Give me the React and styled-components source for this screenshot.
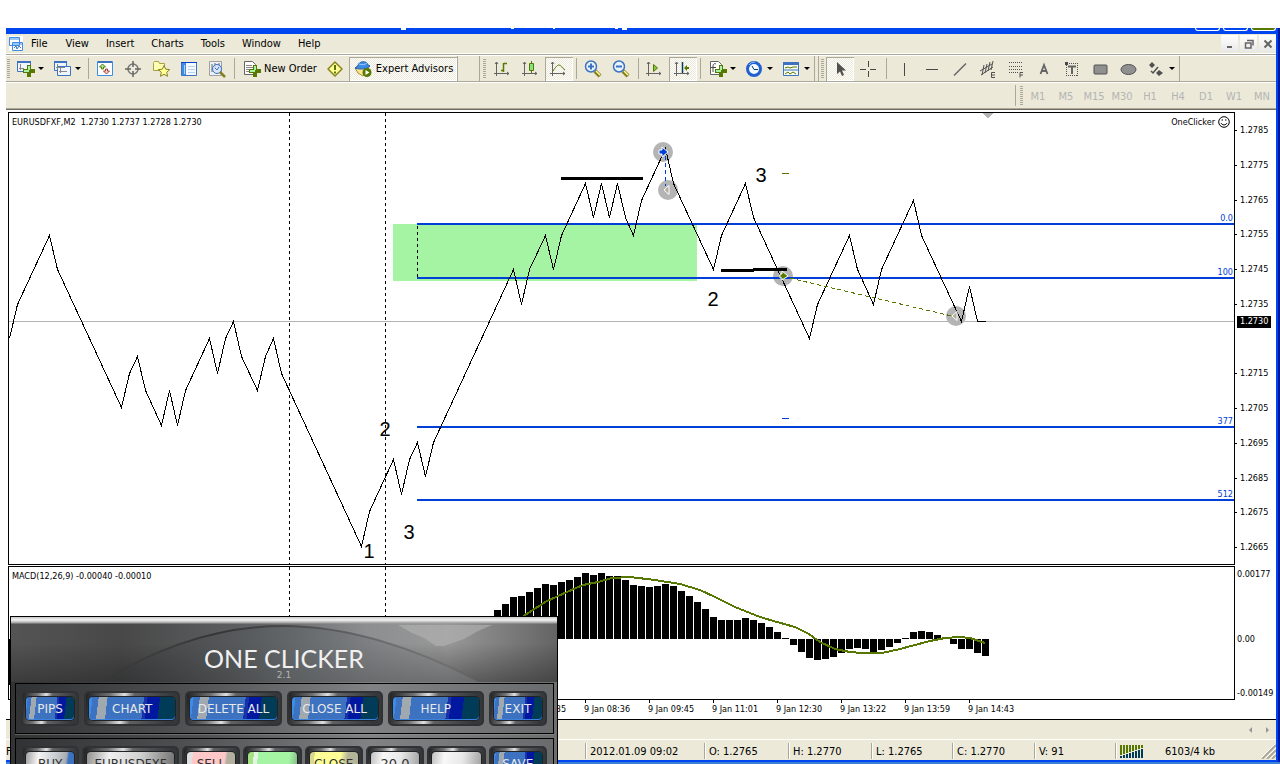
import React from 'react'
import styled, { createGlobalStyle, css } from 'styled-components';

const ui = '"DejaVu Sans Condensed", "Noto Sans", sans-serif';

/* price chart: [bar number, pips above 1.2700] */
const turns = [
  [0, 25], [1, 35], [5, 55], [6, 45], [14, 5], [15, 15], [16, 20], [17, 10], [19, 0], [20, 10],
  [21, 0], [22, 10], [25, 25], [26, 15], [27, 25], [28, 30], [29, 20], [31, 10], [32, 20], [33, 25],
  [34, 15], [44, -35], [45, -25], [48, -10], [49, -20], [50, -10], [51, -5], [52, -15], [53, -5],
  [63, 45], [64, 35], [65, 45], [67, 55], [68, 45], [69, 55], [72, 70], [73, 60], [74, 70], [75, 60],
  [76, 70], [77, 60], [78, 55], [79, 65], [82, 80], [83, 70], [88, 45], [89, 55], [92, 70], [93, 60],
  [100, 25], [101, 35], [105, 55], [106, 45], [108, 35], [109, 45], [113, 65], [114, 55], [119, 30],
  [120, 40], [121, 30], [122, 30],
];
const barX = (bar) => bar * 8 + 0.5;
const priceY = (pips) => Math.round(208 - (pips - 30) * 3.455) + 0.5;
const priceLine = turns.map(([bar, pips]) => `${barX(bar)},${priceY(pips)}`).join(' ');

const firstBar = 61;
const macd = [
  29, 35, 42, 43, 47, 51, 55, 54, 57, 59, 62, 66, 64, 66, 63, 63, 59, 54, 53, 52, 53, 55, 53, 48,
  43, 37, 30, 22, 19, 19, 19, 21, 19, 16, 12, 7, 1, -6, -13, -19, -21, -20, -18, -14, -10, -9, -10,
  -13, -11, -8, -4, 1, 7, 8, 7, 4, 1, -5, -10, -10, -14, -17,
];
const signal = '491,67 505,56 516,48 538,34 558,25 574,18 589,15 603,11 621,10 646,13 671,17 691,23 706,30 726,40 751,50 768,55 786,60 800,67 811,75 826,82 841,85 853,86 873,86 891,82 906,78 921,74 936,71 951,70 961,71 976,76';

const levels = [
  { y: 110, name: '0.0' },
  { y: 164, name: '100' },
  { y: 313, name: '377' },
  { y: 386, name: '512' },
];
const prices = ['1.2785', '1.2775', '1.2765', '1.2755', '1.2745', '1.2735', '', '1.2715', '1.2705', '1.2695', '1.2685', '1.2675', '1.2665'];
const times = ['9 Jan 07:35', '9 Jan 08:36', '9 Jan 09:45', '9 Jan 11:01', '9 Jan 12:30', '9 Jan 13:22', '9 Jan 13:59', '9 Jan 14:43'];
const periods = ['M1', 'M5', 'M15', 'M30', 'H1', 'H4', 'D1', 'W1', 'MN'];
const menus = ['File', 'View', 'Insert', 'Charts', 'Tools', 'Window', 'Help'];

/* ---------- icons ---------- */

const Plus = () => (
  <>
    <path d="M12 6h4v4h4v4h-4v4h-4v-4H8v-4h4z" fill="#567800" />
    <path d="M13 7h2v4h-2zM9 11h5v2H9z" fill="#a4f4a4" />
  </>
);

const Axes = () => <path d="M3.500 3v14M1 14.500h15M2 5l1.500-2L5 5M14 13l2 1.500-2 1.500" stroke="#646464" fill="none" />;

const icons = {
  app: (
    <>
      <path d="M3 2h14v15H3z" fill="#fff" />
      <path d="M3.500 3.500h10v8h-10zM6.500 8.500h10v8h-10z" fill="#fff" stroke="#3c8ce8" />
      <path d="M4 5h9M7 10h9" stroke="#3c8ce8" />
      <path d="M8 14l2-2 1 3 2-3 2 2" stroke="#3c72c0" fill="none" />
    </>
  ),
  newChart: (
    <>
      <path d="M2.500 2.500h13v10h-13z" fill="#f0f4fc" stroke="#3c72c0" />
      <path d="M2 3h14" stroke="#3c72c0" strokeWidth="2" />
      <path d="M5.500 5v6M4 9.500h5" stroke="#888" />
      <Plus />
    </>
  ),
  profiles: (
    <>
      <path d="M2.500 2.500h12v9h-12z" fill="#f0f4fc" stroke="#3c72c0" />
      <path d="M2 3h13" stroke="#3c72c0" strokeWidth="2" />
      <path d="M5.500 7.500h13v9h-13z" fill="#f0f4fc" stroke="#3c72c0" />
      <path d="M5.500 5v5M4 8.500h9M8.500 9v5M7 12.500h8" stroke="#888" />
    </>
  ),
  market: (
    <>
      <path d="M2.500 2.500h15v14h-15z" fill="#fff" stroke="#3c8ce8" />
      <path d="M3 3h14" stroke="#3c72c0" strokeWidth="2" />
      <path d="M7.500 5l3 3h-2v2h-2v-2h-2z" fill="#a4f4a4" stroke="#567800" />
      <path d="M11.500 15l3-3h-2v-2h-2v2h-2z" fill="#ffd0c8" stroke="#a04038" />
    </>
  ),
  target: (
    <>
      <circle cx="10" cy="10" r="5" fill="none" stroke="#787878" strokeWidth="1.500" />
      <path d="M10 2v6M10 12v6M2 10h6M12 10h6" stroke="#646464" strokeWidth="1.500" />
    </>
  ),
  favorites: (
    <>
      <path d="M2.500 4.500v-1l1-1h4l1 2h5v7h-11z" fill="#ffffb4" stroke="#a8a040" />
      <path d="M13 6.500l1.700 3.700 4 .4-3 2.700.9 4-3.600-2-3.600 2 .9-4-3-2.700 4-.4z" fill="#ffff98" stroke="#8a8420" />
    </>
  ),
  terminal: (
    <>
      <path d="M2.500 3.500h15v13h-15z" fill="#f4f8ff" stroke="#3c72c0" />
      <path d="M3 4h4v12H3z" fill="#3c8ce8" />
      <path d="M5.500 6v9M9 7.500h7M9 10.500h7M9 13.500h7" stroke="#b8d0f0" />
      <path d="M2 3.500h16" stroke="#0046c0" />
    </>
  ),
  tester: (
    <>
      <path d="M2.500 2.500h12v14h-12z" fill="#eef2f8" stroke="#a0a0a0" />
      <path d="M5 5v8M8 4v5M12 4v4" stroke="#646464" />
      <circle cx="10" cy="10" r="4.500" fill="#d4e4fc" fillOpacity=".8" stroke="#3c72c0" />
      <path d="M8 9l2 2 2-3" stroke="#3c72c0" fill="none" />
      <path d="M13 13l5 5" stroke="#867c20" strokeWidth="2.500" />
    </>
  ),
  order: (
    <>
      <path d="M3.500 2.500h8l3 3v10h-11z" fill="#fff" stroke="#646464" />
      <path d="M5 6.500h6M5 8.500h7M5 10.500h6M5 12.500h5" stroke="#888" />
      <Plus />
    </>
  ),
  alert: (
    <>
      <path d="M10 3l7 7-7 7-7-7z" fill="#ffff98" stroke="#8a8420" strokeWidth="1.500" strokeLinejoin="round" />
      <path d="M10 6v5M10 12.500v2" stroke="#567800" strokeWidth="2" />
    </>
  ),
  expert: (
    <>
      <path d="M2 9l3 5 5 3 6-6-1-4H4z" fill="#ffe88c" stroke="#a09040" />
      <path d="M5 7c0-5 9-6 10-1l2 1c-3 3-10 4-15 2z" fill="#3c8ce8" stroke="#2860a8" />
      <path d="M6 5c2 1 6 1 8-1" stroke="#9cc8ff" fill="none" />
      <circle cx="14" cy="13.500" r="4.500" fill="#567800" />
      <path d="M12.500 11l4 2.500-4 2.500z" fill="#fff" />
    </>
  ),
  bars: (<><Axes /><path d="M10.500 4v9M8 11.500h2M11 4.500h3" stroke="#567800" strokeWidth="1.500" /></>),
  candles: (<><Axes /><path d="M10.500 2v12" stroke="#567800" /><path d="M8.500 4.500h4v7h-4z" fill="#80e480" stroke="#567800" /></>),
  line: (<><Axes /><path d="M4 12c2-3 4-6 6-6s3 3 6 5" stroke="#567800" fill="none" /></>),
  zoomIn: (
    <>
      <path d="M12 12l5 5" stroke="#867c20" strokeWidth="4" />
      <path d="M13 12l4 4" stroke="#ffff98" strokeWidth="1.500" />
      <circle cx="8" cy="7.500" r="5.500" fill="#e8f2ff" stroke="#3c72c0" strokeWidth="1.500" />
      <path d="M8 4.500v6M5 7.500h6" stroke="#3c72c0" strokeWidth="2" />
    </>
  ),
  zoomOut: (
    <>
      <path d="M12 12l5 5" stroke="#867c20" strokeWidth="4" />
      <path d="M13 12l4 4" stroke="#ffff98" strokeWidth="1.500" />
      <circle cx="8" cy="7.500" r="5.500" fill="#e8f2ff" stroke="#3c72c0" strokeWidth="1.500" />
      <path d="M5 7.500h6" stroke="#3c72c0" strokeWidth="2" />
    </>
  ),
  scroll: (<><Axes /><path d="M8.500 5.500l4 3.500-4 3.500z" fill="#80c840" stroke="#567800" /></>),
  shift: (<><Axes /><path d="M9.500 3v11" stroke="#003c58" strokeWidth="1.500" /><path d="M11 9l3-3v2h2v2h-2v2z" fill="#567800" /></>),
  indicators: (
    <>
      <path d="M3.500 2.500h8l3 3v10h-11z" fill="#fff" stroke="#646464" />
      <path d="M9 5c-2-1-3 0-3 3v5M4 8.500h5" stroke="#484848" fill="none" />
      <Plus />
    </>
  ),
  clock: (
    <>
      <circle cx="10" cy="10" r="6.500" fill="#f4f8ff" stroke="#2060d0" strokeWidth="3" />
      <path d="M5 6a6.500 6.500 0 0 1 6-3" stroke="#8cc0ff" fill="none" />
      <path d="M8 7l2 3.500h4" stroke="#003c58" fill="none" />
    </>
  ),
  template: (
    <>
      <path d="M2.500 3.500h15v13h-15z" fill="#f8fcf0" stroke="#3c72c0" />
      <path d="M2 4.500h16" stroke="#3c72c0" strokeWidth="3" />
      <path d="M3 11h14" stroke="#3c72c0" />
      <path d="M4 9l3-1 2 1 3-1h4M4 15l3-2 2 2 3-2 3 2" stroke="#567800" fill="none" />
    </>
  ),
  cursor: <path d="M7 3v12l3-2.500 2 4.500 2-1-2-4.500h4z" fill="#505050" />,
  cross: <path d="M10.500 2v6M10.500 12v6M2 10.500h6M12 10.500h6" stroke="#484848" />,
  vline: <path d="M10.500 4v13" stroke="#484848" />,
  hline: <path d="M4 10.500h12" stroke="#484848" />,
  diagonal: <path d="M4 16.500L16 4.500" stroke="#646464" strokeWidth="1.500" />,
  channel: (
    <>
      <path d="M2 12L14 5M3 16L15 8M6 6l-2 10M9 5L7 14M12 3l-2 9M15 2l-2 9" stroke="#505050" />
      <path d="M17 13.500h-3.500v5H17M14 16h3" stroke="#505050" fill="none" />
    </>
  ),
  fibo: (
    <>
      <path d="M3 3.500h13M3 7.500h13M3 10.500h13M3 13.500h9" stroke="#505050" strokeDasharray="1 1" shapeRendering="crispEdges" />
      <path d="M17 13.500h-3v5M14 16h3" stroke="#505050" fill="none" />
    </>
  ),
  text: <path d="M6.500 15l3.500-9 3.500 9M8 12h4" stroke="#646464" strokeWidth="1.800" fill="none" />,
  label: (
    <>
      <path d="M4.500 4.500h11v12h-11z" fill="none" stroke="#505050" strokeDasharray="1 1" shapeRendering="crispEdges" />
      <path d="M3 3h3v3H3z" fill="#484848" />
      <path d="M6 7.500h8M10 7v8" stroke="#646464" strokeWidth="2" />
    </>
  ),
  rect: <rect x="4" y="6" width="13" height="9" rx="1" fill="#909090" stroke="#505050" />,
  ellipse: <ellipse cx="10.500" cy="10.500" rx="7.500" ry="5" fill="#909090" stroke="#505050" />,
  arrows: (
    <>
      <path d="M6 3l3 3-3 3-3-3zM13 11l4 3-4 3-3-3z" fill="#505050" />
      <path d="M5 12l2 2 5-6" stroke="#505050" strokeWidth="1.500" fill="none" />
    </>
  ),
};

const Icon = ({ name }) => (
  <svg width="20" height="20" viewBox="0 0 20 20" aria-hidden="true">{icons[name]}</svg>
);

const Tool = ({ name, pressed, drop }) => (
  <ToolButton $pressed={pressed} $drop={drop} aria-label={name} aria-pressed={pressed}>
    <Icon name={name} />
    {drop && <Arrow />}
  </ToolButton>
);

/* ---------- one clicker window ---------- */

const Key = ({ children, tone = 'blue', wide, size }) => (
  <KeyShell $wide={wide}>
    <KeyFace $tone={tone} $size={size}>{children}</KeyFace>
  </KeyShell>
);

const Clicker = () => (
  <Floating aria-label="One Clicker">
    <Header>
      <Arc viewBox="0 0 546 65" preserveAspectRatio="none" aria-hidden="true">
        <defs>
          <linearGradient id="dome" x1="0" x2="1">
            <stop offset="0" stopColor="#303234" stopOpacity=".2" />
            <stop offset=".5" stopColor="#606466" stopOpacity=".8" />
            <stop offset="1" stopColor="#8c8e90" stopOpacity=".3" />
          </linearGradient>
          <linearGradient id="edge" x1="0" x2="1">
            <stop offset="0" stopColor="#2c2c2c" stopOpacity="0" />
            <stop offset=".3" stopColor="#2c2c2c" stopOpacity=".8" />
            <stop offset="1" stopColor="#505254" stopOpacity=".2" />
          </linearGradient>
        </defs>
        <path d="M387 8l14 8 12 5 12 8h8l20-7 14-8 14-6z" fill="#b4b4b4" opacity=".6" />
        <path d="M90 65C150 28 210 9 272 9s130 20 196 56z" fill="url(#dome)" />
        <path d="M90 65C150 28 210 9 272 9s130 20 196 56" fill="none" stroke="url(#edge)" strokeWidth="2" />
      </Arc>
      <Title>ONE CLICKER</Title>
      <Version>2.1</Version>
    </Header>
    <KeyGroup $gap={5}>
      <Key>PIPS</Key>
      <Key wide>CHART</Key>
      <Key wide>DELETE ALL</Key>
      <Key wide>CLOSE ALL</Key>
      <Key wide>HELP</Key>
      <Key>EXIT</Key>
    </KeyGroup>
    <KeyGroup $gap={3}>
      <Key tone="silver">BUY</Key>
      <Key tone="grey" wide>EURUSDFXF</Key>
      <Key tone="pink">SELL</Key>
      <Key tone="green" />
      <Key tone="yellow">CLOSE</Key>
      <Key tone="white" size={13}>20.0</Key>
      <Key tone="white" />
      <Key>SAVE</Key>
    </KeyGroup>
  </Floating>
);

const PriceChart = () => (
  <Plot $height={453}>
    <svg width="100%" height="451" shapeRendering="crispEdges">
      <rect x="384" y="111" width="304" height="57" fill="#a4f4a4" />
      <g fill="#b4b4b4" shapeRendering="auto">
        <circle cx="654" cy="39" r="10" />
        <circle cx="659" cy="77" r="10" />
        <circle cx="774" cy="163" r="10" />
        <circle cx="947" cy="203" r="10" />
      </g>
      <path d="M0 208.500H3000" stroke="#b4b4b4" />
      <path d="M280.500 0V451M376.500 0V451M408.500 113V164" stroke="#000" strokeDasharray="3 3" />
      <path d="M973 0h12l-6 5z" fill="#b4b4b4" />
      {levels.map((level) => (
        <rect key={level.name} x="408" y={level.y} width="100%" height="2" fill="#0040d8" />
      ))}
      <polyline points={priceLine} fill="none" stroke="#000" />
      <path d="M552 65.500h82M712 157.500h33M744 156.500h34" stroke="#000" strokeWidth="3" />
      <path d="M773 60.500h7" stroke="#567800" />
      <path d="M773 305.500h7" stroke="#0040d8" />
      <path d="M774 163.500L947 204" stroke="#567800" strokeDasharray="4 3" />
      <path d="M656.500 43V73" stroke="#0040d8" strokeDasharray="4 3" />
      <g shapeRendering="auto" stroke="#fff">
        <path d="M650 37h3v-3l6 5-6 5v-3h-3z" fill="#0040d8" />
        <path d="M655 77l5-4.500v9z" fill="#b4aca0" />
        <path d="M771 161h2v-3l6 5-6 4v-2h-2z" fill="#567800" />
        <path d="M943 203l5-4.500v9z" fill="#b4aca0" />
      </g>
      <Count x="752" y="69">3</Count>
      <Count x="704" y="193">2</Count>
      <Count x="376" y="323">2</Count>
      <Count x="400" y="426">3</Count>
      <Count x="360" y="445">1</Count>
    </svg>
    <PlotTitle>EURUSDFXF,M2&nbsp; 1.2730 1.2737 1.2728 1.2730</PlotTitle>
    <AdvisorName>
      OneClicker
      <svg width="12" height="12" viewBox="0 0 12 12" aria-hidden="true">
        <circle cx="6" cy="6" r="5.300" fill="none" stroke="#000" />
        <path d="M3.500 4h1.500M7 4h1.500M3 7c1 2.500 5 2.500 6 0" fill="none" stroke="#000" />
      </svg>
    </AdvisorName>
    {levels.map((level) => (
      <LevelName key={level.name} style={{ top: level.y - 11 }}>{level.name}</LevelName>
    ))}
  </Plot>
);

const MacdChart = () => (
  <Plot $height={134}>
    <svg width="100%" height="132" shapeRendering="crispEdges">
      <path d="M280.500 0V132M376.500 0V132" stroke="#000" strokeDasharray="3 3" />
      <rect x="0" y="72" width="4" height="46" />
      {macd.map((v, i) => (
        <rect key={i} x={(firstBar + i) * 8 - 3} y={v > 0 ? 72 - v : 72} width="7" height={Math.abs(v)} />
      ))}
      <polyline points={signal} fill="none" stroke="#567800" strokeWidth="2" />
    </svg>
    <PlotTitle>MACD(12,26,9) -0.00040 -0.00010</PlotTitle>
  </Plot>
);

const App = () => {
  return (
    <Page>
      <Global />
      <Frame>
        <TitleBar>
          <svg width="240" height="3" aria-hidden="true">
            <path d="M7 0h5v2H7zM117 0h3v1h-3zM159 0h2v1h-2zM221 0h3v1h-3zM228 0h5v2h-5z" fill="#fff" />
          </svg>
          <Captions>
            <Caption aria-label="Minimize window" />
            <Caption aria-label="Restore window" />
            <Caption aria-label="Close window" $olive />
          </Captions>
        </TitleBar>
        <Body>
          <MenuBar>
            <Icon name="app" />
            {menus.map((m) => <MenuItem key={m}>{m}</MenuItem>)}
            <ChildButtons>
              <ChildButton aria-label="Minimize"><svg width="10" height="10"><path d="M2 8h5" stroke="#646464" strokeWidth="2" /></svg></ChildButton>
              <ChildButton aria-label="Restore"><svg width="10" height="10"><path d="M3 1.500h6v5M1.500 4h5.500v5h-5.500z" stroke="#646464" strokeWidth="1.500" fill="none" /></svg></ChildButton>
              <ChildButton aria-label="Close"><svg width="10" height="10"><path d="M1.500 1.500l7 7M8.500 1.500l-7 7" stroke="#646464" strokeWidth="2" /></svg></ChildButton>
            </ChildButtons>
          </MenuBar>

          <ToolRow>
            <Section>
              <Grip $width={5} />
              <Tool name="newChart" drop />
              <Tool name="profiles" drop />
              <Divider />
              <Tool name="market" />
              <Tool name="target" />
              <Tool name="favorites" />
              <Tool name="terminal" />
              <Tool name="tester" />
              <Divider />
              <TextTool><Icon name="order" />New Order</TextTool>
              <Tool name="alert" />
              <TextTool $pressed><Icon name="expert" />Expert Advisors</TextTool>
            </Section>
            <Gap $width={21} />
            <Section $left>
              <Grip $width={9} />
              <Tool name="bars" />
              <Tool name="candles" />
              <Tool name="line" pressed />
              <Divider />
              <Tool name="zoomIn" />
              <Tool name="zoomOut" />
              <Divider />
              <Tool name="scroll" />
              <Tool name="shift" pressed />
              <Divider />
              <Tool name="indicators" drop />
              <Tool name="clock" drop />
              <Tool name="template" drop />
            </Section>
            <Gap $width={3} />
            <Section $left>
              <Grip $width={7} />
              <Tool name="cursor" pressed />
              <Tool name="cross" />
              <Divider />
              <Tool name="vline" />
              <Tool name="hline" />
              <Tool name="diagonal" />
              <Tool name="channel" />
              <Tool name="fibo" />
              <Tool name="text" />
              <Tool name="label" />
              <Tool name="rect" />
              <Tool name="ellipse" />
              <Tool name="arrows" drop />
            </Section>
          </ToolRow>

          <PeriodRow>
            <Divider />
            <Grip $width={6} />
            {periods.map((p) => <Period key={p} disabled>{p}</Period>)}
          </PeriodRow>

          <ChartWindow>
            <ChartLine>
              <PriceChart />
              <PriceAxis>
                {prices.map((p, i) => p ? <Tick key={i}>{p}</Tick> : <Current key={i}>1.2730</Current>)}
              </PriceAxis>
            </ChartLine>
            <ChartLine>
              <MacdChart />
              <MacdAxis>
                <span>0.00177</span>
                <MacdZero>0.00</MacdZero>
                <span>-0.00149</span>
              </MacdAxis>
            </ChartLine>
            <TimeAxis>
              {times.map((t) => <Time key={t}>{t}</Time>)}
            </TimeAxis>
            <Clicker />
          </ChartWindow>

          <TabStrip>
            <ScrollTab aria-label="Scroll left"><svg width="5" height="8"><path d="M4 1v6L1 4z" fill="#969696" /></svg></ScrollTab>
            <ScrollTab aria-label="Scroll right"><svg width="5" height="8"><path d="M1 1v6l3-3z" fill="#969696" /></svg></ScrollTab>
          </TabStrip>
          <StatusBar>
            <Help>F</Help>
            <Cell $width={119}>2012.01.09 09:02</Cell>
            <Cell $width={84}>O: 1.2765</Cell>
            <Cell $width={83}>H: 1.2770</Cell>
            <Cell $width={81}>L: 1.2765</Cell>
            <Cell $width={82}>C: 1.2770</Cell>
            <Cell $width={81}>V: 91</Cell>
            <Cell $width={161}>
              <svg width="24" height="13" shapeRendering="crispEdges" aria-hidden="true">
                {[0, 1, 2, 3, 4, 5, 6, 7].map((n) => (
                  <g key={n}>
                    <rect x={n * 3} y="0" width="2" height={10 - n} fill="#567800" />
                    <rect x={n * 3} y={11 - n} width="2" height={n + 2} fill="#003c58" />
                  </g>
                ))}
              </svg>
              <Traffic>6103/4 kb</Traffic>
              <svg width="15" height="15" aria-hidden="true">
                <path d="M1 15L15 1M6 15l9-9M11 15l4-4" stroke="#aca899" strokeWidth="2" />
                <path d="M0 14L14 0M5 14l10-10M10 14l5-5" stroke="#fff" />
              </svg>
            </Cell>
          </StatusBar>
        </Body>
      </Frame>
    </Page>
  )
};

const Global = createGlobalStyle`
body {
  margin: 0;
  background: #fff;
}
button {
  border: 0;
  padding: 0;
  margin: 0;
  background: none;
  font: inherit;
  color: inherit;
}
svg {
  display: block;
  flex: none;
}
`;

const Page = styled.div`
  padding: 28px 0 0 6px;
  font-family: ${ui};
  font-size: 11px;
  color: #000;
  overflow: hidden;
`;
const Frame = styled.div`
  background: linear-gradient(to right, #0046f0 50%, #0018a0 50%) right / 4px 100% no-repeat #0046f0;
  border-bottom: 2px solid #3c80d8;
  padding: 0 4px 2px 0;
`;
const TitleBar = styled.div`
  display: flex;
  justify-content: space-between;
  height: 6px;
  padding-left: 388px;
`;
const Captions = styled.div`
display: flex;
gap: 3px;
`;
const Caption = styled.button`
  width: 25px;
  height: 3px;
  border: 1px solid #fff;
  border-top: 0;
  border-radius: 0 0 4px 4px;
  background: ${(p) => (p.$olive ? '#567800' : '#0046f0')};
`;
const Body = styled.div`
  background: #ece9d8;
`;

const MenuBar = styled.div`
  display: flex;
  align-items: center;
  height: 19px;
  border-bottom: 1px solid #fff;
`;
const MenuItem = styled.button`
  padding: 0 8px 0 9px;
  height: 19px;
  &:first-of-type {
    padding: 0 9px 0 5px;
  }
`;
const ChildButtons = styled.div`
display: flex;
gap: 2px;
margin-left: auto;
`;
const ChildButton = styled.button`
  display: flex;
  align-items: center;
  justify-content: center;
  width: 17px;
  height: 17px;
  background: linear-gradient(#fff, #e8e8e8);
`;

const ToolRow = styled.div`
  display: flex;
  height: 25px;
  border-top: 1px solid #aca899;
  border-bottom: 1px solid #aca899;
  box-shadow: inset 0 1px #fff;
  padding-top: 1px;
`;
const Grip = styled.div`
  width: ${(p) => p.$width}px;
  height: 19px;
  background: repeating-linear-gradient(#aca899 0 1px, #ece9d8 1px 2px) center / 3px 100% no-repeat;
`;
const Divider = styled.div`
  width: 6px;
  height: 21px;
  background: linear-gradient(#aca899, #aca899) center / 1px 100% no-repeat;
`;
const Section = styled.div`
  display: flex;
  align-items: center;
  border-right: 1px solid #aca899;
  ${(p) => p.$left && css`
    border-left: 1px solid #aca899;
  `}
  &:last-child ${Divider} {
    width: 8px;
  }
`;
const Gap = styled.div`
width: ${(p) => p.$width}px;
`;
const pressedLook = css`
  background: repeating-conic-gradient(#fff 0 25%, #ece9d8 0 50%) 0 0 / 2px 2px;
  box-shadow: inset 1px 1px #aca899, inset -1px -1px #fff;
`;
const ToolButton = styled.button`
  display: flex;
  align-items: center;
  justify-content: center;
  width: 28px;
  height: 24px;
  ${(p) => p.$drop && css`
    width: 37px;
    gap: 3px;
  `}
  ${(p) => p.$pressed && pressedLook}
`;
const Arrow = styled.span`
  border: 3px solid transparent;
  border-top-color: #000;
  border-bottom: 0;
`;
const TextTool = styled.button`
  display: flex;
  align-items: center;
  gap: 3px;
  height: 24px;
  padding: 0 4px;
  white-space: nowrap;
  ${(p) => p.$pressed && pressedLook}
`;

const PeriodRow = styled.div`
  display: flex;
  justify-content: flex-end;
  align-items: center;
  height: 25px;
  border-top: 1px solid #fff;
  border-bottom: 1px solid #aca899;
`;
const Period = styled.button`
  width: 28px;
  padding-top: 1px;
  color: #b4b4b4;
`;

const ChartWindow = styled.div`
  position: relative;
  background: #fff;
  border-top: 1px solid #716f64;
  border-bottom: 1px solid #000;
  padding: 2px 2px 0 2px;
  font-size: 9px;
  line-height: 12px;
`;
const ChartLine = styled.div`
  display: flex;
  margin-bottom: 1px;
  &:nth-child(2) {
    margin-bottom: 0;
  }
`;
const Plot = styled.div`
  position: relative;
  flex: 1;
  min-width: 0;
  box-sizing: border-box;
  height: ${(p) => p.$height}px;
  border: 1px solid #000;
  overflow: hidden;
`;
const PlotTitle = styled.span`
  position: absolute;
  top: 3px;
  left: 3px;
`;
const AdvisorName = styled.span`
  position: absolute;
  top: 3px;
  right: 4px;
  display: flex;
  gap: 3px;
`;
const LevelName = styled.span`
  position: absolute;
  right: 1px;
  color: #0040d8;
`;
const Count = styled.text`
  font-family: "Liberation Sans", sans-serif;
  font-size: 20px;
  text-anchor: middle;
`;
const PriceAxis = styled.div`
  display: flex;
  flex-direction: column;
  justify-content: space-between;
  box-sizing: border-box;
  width: 39px;
  height: 453px;
  padding: 12px 0;
`;
const Tick = styled.span`
  display: flex;
  gap: 3px;
  &::before {
    content: "";
    width: 2px;
    height: 1px;
    margin-top: 6px;
    background: #000;
  }
`;
const Current = styled.span`
  position: relative;
  top: -17px;
  margin-left: 2px;
  width: 34px;
  line-height: 11px;
  height: 12px;
  box-sizing: border-box;
  padding-left: 3px;
  background: #000;
  color: #fff;
`;
const MacdAxis = styled.div`
  display: flex;
  flex-direction: column;
  justify-content: space-between;
  box-sizing: border-box;
  width: 39px;
  padding: 2px 0 1px 2px;
  height: 134px;
  white-space: nowrap;
`;
const MacdZero = styled.span`
margin-top: 10px;
`;
const TimeAxis = styled.div`
  display: flex;
  height: 19px;
  padding-left: 512px;
  overflow: hidden;
`;
const Time = styled.span`
  flex: none;
  width: 64px;
  white-space: nowrap;
  &::before {
    content: "";
    display: block;
    width: 1px;
    height: 3px;
    margin-left: 1px;
    background: #000;
  }
`;

const TabStrip = styled.div`
  display: flex;
  justify-content: flex-end;
  align-items: center;
  gap: 12px;
  height: 19px;
  padding-right: 6px;
  border-bottom: 1px solid #fff;
`;
const ScrollTab = styled.button`
width: 5px;
`;
const StatusBar = styled.div`
  display: flex;
  align-items: center;
  height: 18px;
  padding-top: 2px;
  overflow: hidden;
`;
const Help = styled.div`
flex: 1;
white-space: nowrap;
`;
const Cell = styled.div`
  display: flex;
  align-items: center;
  box-sizing: border-box;
  width: ${(p) => p.$width}px;
  height: 16px;
  padding-left: 4px;
  border-left: 1px solid #aca899;
  box-shadow: inset 1px 0 #fff;
  white-space: nowrap;
`;
const Traffic = styled.span`
  flex: 1;
  padding-left: 21px;
`;

const Floating = styled.section`
  position: absolute;
  left: 4px;
  top: 506px;
  width: 546px;
  height: 200px;
  border: 1px solid #000;
  background: linear-gradient(100deg, #303030, #4c4e50 35%, #808284 65%, #6c6c6c);
  overflow: hidden;
  z-index: 1;
`;
const Header = styled.header`
  position: relative;
  display: flex;
  flex-direction: column;
  align-items: center;
  height: 65px;
  background: linear-gradient(#c8c8c8, #f4f4f4 3px, #a0a0a0 6px, transparent 7px),
    linear-gradient(transparent 40%, rgba(30, 30, 30, .45)),
    linear-gradient(90deg, #545454, #484848 20%, #606264 45%, #8c8e90 65%, #989898 80%, #646464);
`;
const Arc = styled.svg`
  position: absolute;
  inset: 0;
  width: 100%;
  height: 100%;
`;
const Title = styled.h1`
  position: relative;
  margin: 30px 0 0;
  font-family: Lato, sans-serif;
  font-size: 25px;
  font-weight: 400;
  line-height: 22px;
  color: #f0f0f0;
`;
const Version = styled.span`
  position: relative;
  margin-top: 1px;
  font-family: "DejaVu Sans", sans-serif;
  font-size: 9px;
  line-height: 10px;
  color: #b4b4b4;
`;
const KeyGroup = styled.div`
  display: flex;
  gap: ${(p) => p.$gap}px;
  box-sizing: border-box;
  height: 51px;
  margin: 1px 3px 4px 4px;
  padding: 7px 6px 7px 5px;
  border: 1px solid #000;
  background: linear-gradient(100deg, #303234, #4c4e50 30%, #808284 65%, #686a6c);
  box-shadow: 0 1px rgba(160, 160, 160, .4);
`;
const KeyShell = styled.div`
  flex: 1 1 ${(p) => (p.$wide ? 96 : 58)}px;
  box-sizing: border-box;
  min-width: 0;
  height: 35px;
  padding: 4px 3px;
  border: 2px solid #303234;
  border-radius: 5px;
  background: linear-gradient(100deg, #202224, #707274 25%, #e0e0e0 40%, #606264 50%, #34383a 90%);
`;
const tones = {
  blue: 'linear-gradient(97deg, #3c8ce8 4%, #3c72c0 4% 11%, #a0a8b0 11% 21%, #3c72c0 21% 62%, #1830a8 62% 66%, #0018a0 66% 80%, #003c58 80%)',
  silver: 'linear-gradient(98deg, #a0a0a0, #f4f4f4 25%, #c8ccd0 60%, #a8acb0 80%, #3c72c0 85%)',
  grey: 'linear-gradient(98deg, #909090, #f0f0f0 25%, #d0d0d0 60%, #707070)',
  pink: 'linear-gradient(98deg, #e0e0e0 12%, #ffc8c8 12% 75%, #b4b0a0 80%)',
  green: 'linear-gradient(98deg, #a4e084 12%, #e4f4e4 12% 20%, #a4f4a4 20% 80%, #84b484)',
  yellow: 'linear-gradient(98deg, #d8d890 10%, #ffff98 10% 60%, #b4b498 75%)',
  white: 'linear-gradient(98deg, #c0c0c0, #f8f8f8 25%, #e8e8e8 60%, #a0a0a0)',
};
const edges = { blue: '#3c82e0', silver: '#3c72c0', green: '#789808', yellow: '#789808' };
const KeyFace = styled.button`
  display: block;
  width: 100%;
  height: 23px;
  border-radius: 4px;
  background: ${(p) => tones[p.$tone]};
  box-shadow: 0 0 0 1px #202224, inset 0 -1px ${(p) => edges[p.$tone] || '#b0b0b0'};
  font-family: "DejaVu Sans", sans-serif;
  font-size: ${(p) => p.$size || 12}px;
  color: ${(p) => (p.$tone === 'blue' ? '#e8e8e8' : '#303030')};
  white-space: nowrap;
`;

export default App;
